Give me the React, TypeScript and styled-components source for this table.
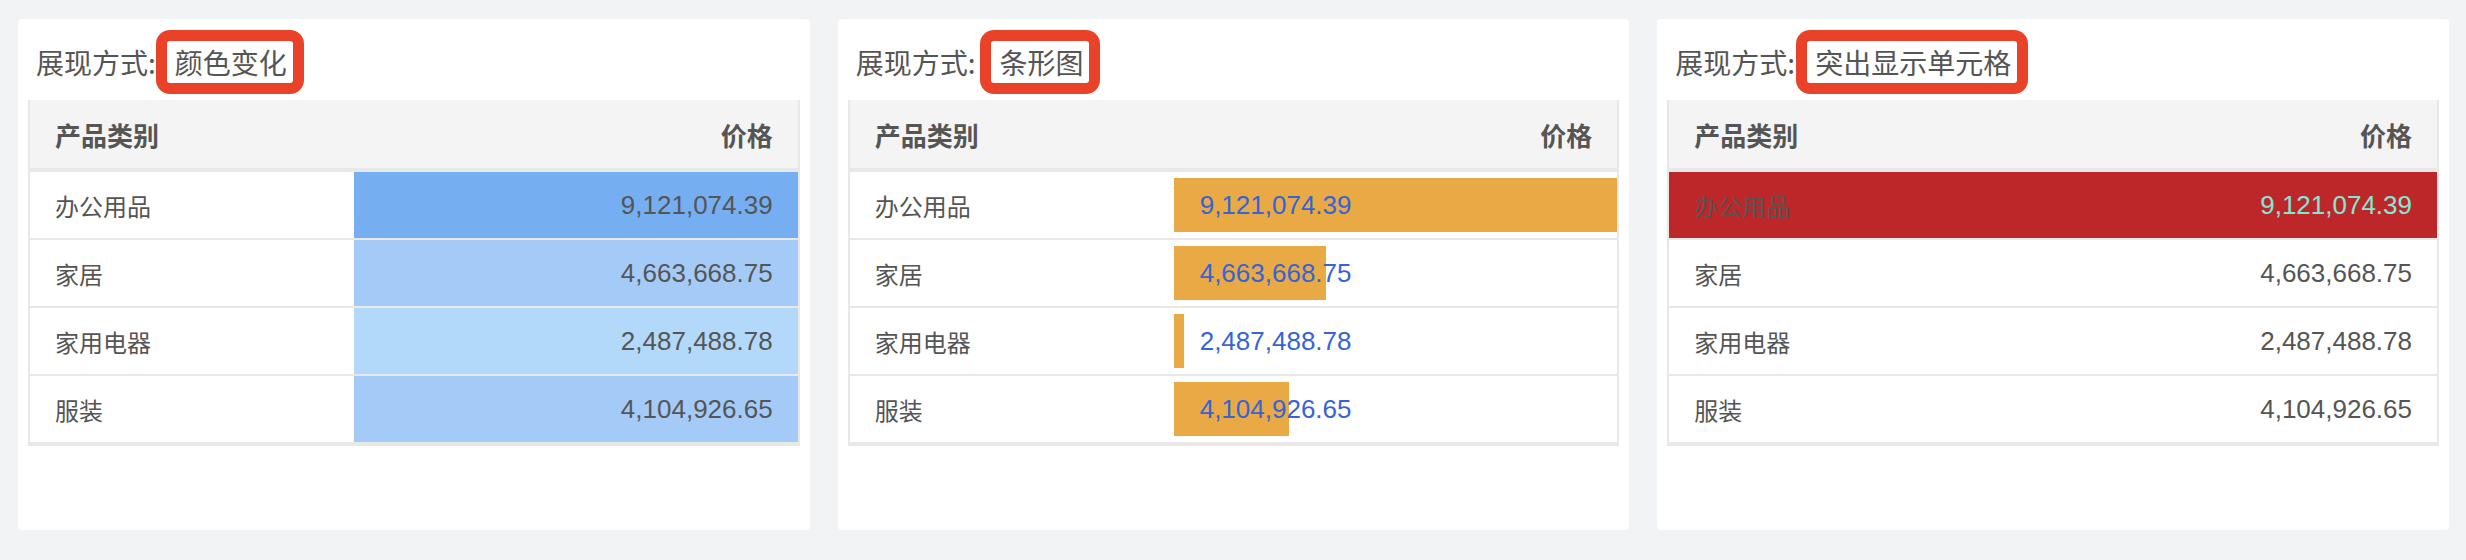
import styled, { createGlobalStyle } from 'styled-components';

const GlobalStyle = createGlobalStyle`
    html, body {
        margin: 0;
        padding: 0;
        background-color: #f2f3f5;
    }
    body {
        font-family: "Noto Sans CJK SC", "Noto Sans", sans-serif;
        color: #555;
    }
`;

const Page = styled.div`
    display: flex;
    gap: 28px;
    padding: 19px 17px 30px 18px;
    height: 560px;
    box-sizing: border-box;
`;

const Panel = styled.section`
    flex: 1;
    min-width: 0;
    background-color: #fff;
    border-radius: 4px;
    padding: 0 10px;
`;

const Title = styled.div`
    height: 81px;
    padding: 5px 8px 0;
    box-sizing: border-box;
    display: flex;
    align-items: center;
    font-size: 28px;
    color: #555;
    white-space: nowrap;
`;

const Label = styled.span`
    line-height: 40px;
`;

const ValueBox = styled.span<{ $shift: number }>`
    display: inline-block;
    margin-left: ${(props) => props.$shift}px;
    padding: 0 6px 0 8px;
    border: 11px solid #ea4229;
    border-radius: 14px;
    background-color: #fff;
    line-height: 42px;
    color: #555;
`;

const Table = styled.div`
    border: 2px solid #e8e8e8;
    border-top: none;
`;

const HeaderRow = styled.div`
    display: grid;
    grid-template-columns: 324px 1fr;
    height: 68px;
    align-items: center;
    background-color: #f4f4f4;
    border-bottom: 4px solid #e8e8e8;
    font-size: 26px;
    font-weight: 600;
    color: #555;
    padding: 0 25px;
`;

const HeadRight = styled.span`
    text-align: right;
`;

const Row = styled.div<{ $bg?: string }>`
    display: grid;
    grid-template-columns: 324px 1fr;
    height: 66px;
    border-bottom: 2px solid #e8e8e8;
    background-color: ${(props) => props.$bg || '#fff'};
    &:last-child {
        border-bottom: 2px solid #e8e8e8;
    }
`;

const NameCell = styled.div`
    display: flex;
    align-items: center;
    padding-left: 25px;
    font-size: 24px;
    color: #555;
`;

const NumCell = styled.div<{ $bg?: string; $color?: string; $align?: string }>`
    position: relative;
    display: flex;
    align-items: center;
    justify-content: ${(props) => (props.$align === 'left' ? 'flex-start' : 'flex-end')};
    padding: ${(props) => (props.$align === 'left' ? '0 0 0 26px' : '0 25px 0 0')};
    background-color: ${(props) => props.$bg || 'transparent'};
    font-family: "Liberation Sans", Arial, sans-serif;
    font-size: 26px;
    color: ${(props) => props.$color || '#555'};
`;

const Bar = styled.div`
    position: absolute;
    left: 0;
    top: 6px;
    bottom: 6px;
    background-color: #e9a944;
`;

const NumText = styled.span`
    position: relative;
`;

interface IItem {
    name: string;
    value: number;
}

const items: IItem[] = [
    { name: '办公用品', value: 9121074.39 },
    { name: '家居', value: 4663668.75 },
    { name: '家用电器', value: 2487488.78 },
    { name: '服装', value: 4104926.65 },
];

const fmt = (v: number) =>
    v.toLocaleString('en-US', { minimumFractionDigits: 2, maximumFractionDigits: 2 });

const max = Math.max(...items.map((i) => i.value));
const min = Math.min(...items.map((i) => i.value));

const scaleColor = (v: number) => {
    if (v > 8000000) return '#76aef2';
    if (v > 3000000) return '#a4cbf7';
    return '#b3d9fa';
};

// bar starts with a 10px stub at the min value, full cell at the max
const barWidth = (v: number) => ((10 + ((v - min) / (max - min)) * 434) / 444) * 100;

function Header() {
    return (
        <HeaderRow>
            <span>产品类别</span>
            <HeadRight>价格</HeadRight>
        </HeaderRow>
    );
}

function ColorTable() {
    return (
        <Table>
            <Header />
            {items.map((item) => (
                <Row key={item.name}>
                    <NameCell>{item.name}</NameCell>
                    <NumCell $bg={scaleColor(item.value)}>{fmt(item.value)}</NumCell>
                </Row>
            ))}
        </Table>
    );
}

function BarTable() {
    return (
        <Table>
            <Header />
            {items.map((item) => (
                <Row key={item.name}>
                    <NameCell>{item.name}</NameCell>
                    <NumCell $align="left" $color="#3464d8">
                        <Bar style={{ width: `${barWidth(item.value)}%` }} />
                        <NumText>{fmt(item.value)}</NumText>
                    </NumCell>
                </Row>
            ))}
        </Table>
    );
}

function HighlightTable() {
    return (
        <Table>
            <Header />
            {items.map((item) => {
                const hot = item.value === max;
                return (
                    <Row key={item.name} $bg={hot ? '#bd2729' : undefined}>
                        <NameCell>{item.name}</NameCell>
                        <NumCell $color={hot ? '#7fe9d6' : undefined}>{fmt(item.value)}</NumCell>
                    </Row>
                );
            })}
        </Table>
    );
}

function App() {
    return (
        <>
            <GlobalStyle />
            <Page>
                <Panel>
                    <Title>
                        <Label>展现方式:</Label>
                        <ValueBox $shift={0}>颜色变化</ValueBox>
                    </Title>
                    <ColorTable />
                </Panel>
                <Panel>
                    <Title>
                        <Label>展现方式:</Label>
                        <ValueBox $shift={5}>条形图</ValueBox>
                    </Title>
                    <BarTable />
                </Panel>
                <Panel>
                    <Title>
                        <Label>展现方式:</Label>
                        <ValueBox $shift={1}>突出显示单元格</ValueBox>
                    </Title>
                    <HighlightTable />
                </Panel>
            </Page>
        </>
    );
}

export default App;
